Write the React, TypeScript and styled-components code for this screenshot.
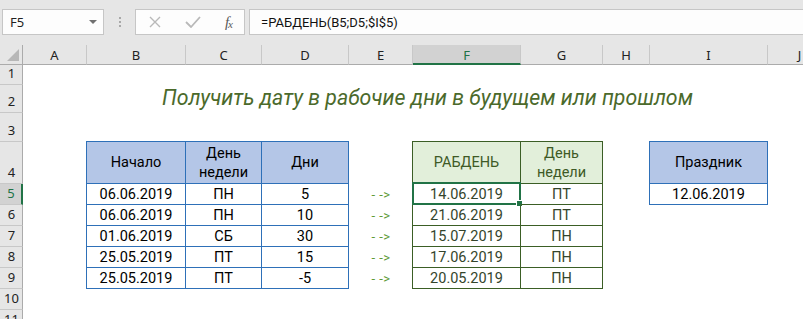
import React from 'react';
import styled, { createGlobalStyle } from 'styled-components';

const GlobalStyle = createGlobalStyle`
  html, body { margin: 0; padding: 0; background: #ffffff; overflow: hidden; }
  #root { width: 803px; height: 319px; overflow: hidden; }
`;

const COLS = [23, 64, 99, 76, 87, 64, 108, 82, 47, 118, 64];
const ROWS = [20, 20, 28, 29, 42, 21, 21, 21, 21, 21, 21, 21];
const LETTERS = ['A', 'B', 'C', 'D', 'E', 'F', 'G', 'H', 'I', 'J'];
const px = (a: number[]) => a.map((v) => `${v}px`).join(' ');

const Page = styled.div`
  width: 803px;
  height: 319px;
  overflow: hidden;
  background: #ffffff;
  display: flex;
  flex-direction: column;
`;

const TopBar = styled.div`
  height: 45px;
  flex: none;
  background: #e6e6e6;
  display: flex;
  align-items: flex-start;
  padding-top: 9px;
  box-sizing: border-box;
  font-family: 'Noto Sans', sans-serif;
`;

const Box = styled.div`
  height: 26px;
  box-sizing: border-box;
  background: #fdfdfd;
  border: 1px solid #c6c6c6;
  display: flex;
  align-items: center;
`;

const NameBox = styled(Box)`
  width: 102px;
  margin-left: 2px;
  padding: 0 6px 0 7px;
  justify-content: space-between;
  font-size: 13px;
  color: #222;
`;

const Grip = styled.div`
  width: 31px;
  height: 26px;
  display: flex;
  flex-direction: column;
  align-items: center;
  justify-content: center;
  gap: 2px;
  span {
    width: 2px;
    height: 2px;
    background: #a8a8a8;
  }
`;

const FxBox = styled(Box)`
  width: 110px;
  padding: 0 12px 0 13px;
  justify-content: space-between;
`;

const FxText = styled.span`
  font-family: 'Liberation Serif', serif;
  font-style: italic;
  font-size: 15px;
  color: #5a5a5a;
  letter-spacing: -1px;
  sub {
    font-size: 11px;
    vertical-align: -1px;
  }
`;

const FormulaBox = styled(Box)`
  flex: 1;
  margin-left: 4px;
  border-right: none;
  padding-left: 11px;
  font-family: Roboto, sans-serif;
  font-size: 13px;
  color: #111;
`;

const Sheet = styled.div`
  display: grid;
  grid-template-columns: ${px(COLS)};
  grid-template-rows: ${px(ROWS)};
  font-family: Roboto, sans-serif;
`;

const Corner = styled.div`
  grid-row: 1;
  grid-column: 1;
  background: #e6e6e6;
  border-right: 1px solid #ababab;
  border-bottom: 1px solid #ababab;
  box-sizing: border-box;
  display: flex;
  align-items: flex-end;
  justify-content: flex-end;
  padding: 0 3px 3px 0;
`;

const ColHead = styled.div<{ $col: number; $active?: boolean }>`
  grid-row: 1;
  grid-column: ${(p) => p.$col};
  box-sizing: border-box;
  background: ${(p) => (p.$active ? '#d2d2d2' : '#e6e6e6')};
  border-right: 1px solid #c8c8c8;
  border-bottom: ${(p) => (p.$active ? '2px solid #217346' : '1px solid #ababab')};
  display: flex;
  align-items: center;
  justify-content: center;
  font-family: 'Noto Sans', sans-serif;
  font-size: 13px;
  color: ${(p) => (p.$active ? '#217346' : '#222')};
  padding-top: ${(p) => (p.$active ? '1px' : '0')};
`;

const RowHead = styled.div<{ $row: number; $active?: boolean }>`
  grid-row: ${(p) => p.$row};
  grid-column: 1;
  box-sizing: border-box;
  background: ${(p) => (p.$active ? '#d2d2d2' : '#e6e6e6')};
  border-right: ${(p) => (p.$active ? '2px solid #217346' : '1px solid #ababab')};
  border-bottom: 1px solid #c8c8c8;
  display: flex;
  align-items: flex-end;
  justify-content: center;
  padding-bottom: 2px;
  padding-left: 1px;
  font-family: 'Noto Sans', sans-serif;
  font-size: 13px;
  color: ${(p) => (p.$active ? '#217346' : '#222')};
`;

const Title = styled.div`
  grid-row: 3;
  grid-column: 3 / 11;
  display: flex;
  align-items: flex-end;
  justify-content: center;
  padding-bottom: 3px;
  font-style: italic;
  font-size: 21.3px;
  color: #4b6a2b;
  white-space: nowrap;
`;

const Arrow = styled.div<{ $row: number }>`
  grid-row: ${(p) => p.$row};
  grid-column: 6;
  display: flex;
  align-items: center;
  justify-content: center;
  font-size: 13px;
  color: #5d9a37;
  letter-spacing: 0.5px;
  white-space: pre;
`;

const Table = styled.div<{
  $col: string;
  $row: string;
  $cols: number[];
  $rows: number[];
  $line: string;
}>`
  grid-column: ${(p) => p.$col};
  grid-row: ${(p) => p.$row};
  margin: -1px 0 0 -1px;
  display: grid;
  grid-template-columns: ${(p) => px(p.$cols)};
  grid-template-rows: ${(p) => px(p.$rows)};
  border-left: 1px solid ${(p) => p.$line};
  border-top: 1px solid ${(p) => p.$line};
`;

const Cell = styled.div<{ $line: string; $fill?: string; $color: string }>`
  position: relative;
  box-sizing: border-box;
  border-right: 1px solid ${(p) => p.$line};
  border-bottom: 1px solid ${(p) => p.$line};
  background: ${(p) => p.$fill || 'transparent'};
  color: ${(p) => p.$color};
  display: flex;
  align-items: center;
  justify-content: center;
  text-align: center;
  font-size: 14.5px;
  line-height: 19px;
`;

const Selection = styled.div`
  position: absolute;
  top: -2px;
  left: -1px;
  right: -1px;
  bottom: -1px;
  border: 2px solid #217346;
  pointer-events: none;
`;

const Handle = styled.div`
  position: absolute;
  right: -4px;
  bottom: -4px;
  width: 5px;
  height: 5px;
  background: #217346;
  border: 1px solid #ffffff;
  box-sizing: content-box;
`;

const BLUE = '#2e70b8';
const BLUE_FILL = '#b4c6e7';
const GREEN = '#3b5e25';
const GREEN_FILL = '#e2efda';

const t1 = [
  ['06.06.2019', 'ПН', '5'],
  ['06.06.2019', 'ПН', '10'],
  ['01.06.2019', 'СБ', '30'],
  ['25.05.2019', 'ПТ', '15'],
  ['25.05.2019', 'ПТ', '-5'],
];
const t2 = [
  ['14.06.2019', 'ПТ'],
  ['21.06.2019', 'ПТ'],
  ['15.07.2019', 'ПН'],
  ['17.06.2019', 'ПН'],
  ['20.05.2019', 'ПН'],
];

export default function App() {
  return (
    <Page>
      <GlobalStyle />
      <TopBar>
        <NameBox>
          <span>F5</span>
          <svg width="8" height="4" viewBox="0 0 8 4">
            <path d="M0 0 H8 L4 4 Z" fill="#707070" />
          </svg>
        </NameBox>
        <Grip>
          <span />
          <span />
          <span />
        </Grip>
        <FxBox>
          <svg width="12" height="12" viewBox="0 0 12 12">
            <path d="M1 1 L11 11 M11 1 L1 11" stroke="#b9b9b9" strokeWidth="1.4" fill="none" />
          </svg>
          <svg width="16" height="12" viewBox="0 0 16 12">
            <path d="M1 6 L6 11 L15 1" stroke="#b9b9b9" strokeWidth="1.8" fill="none" />
          </svg>
          <FxText>
            f<sub>x</sub>
          </FxText>
        </FxBox>
        <FormulaBox>=РАБДЕНЬ(B5;D5;$I$5)</FormulaBox>
      </TopBar>
      <Sheet>
        <Corner>
          <svg width="12" height="12" viewBox="0 0 12 12">
            <path d="M12 0 V12 H0 Z" fill="#b7b7b7" />
          </svg>
        </Corner>
        {LETTERS.map((l, i) => (
          <ColHead key={l} $col={i + 2} $active={l === 'F'}>
            {l}
          </ColHead>
        ))}
        {Array.from({ length: 11 }, (_, i) => (
          <RowHead key={i} $row={i + 2} $active={i + 1 === 5}>
            {i + 1}
          </RowHead>
        ))}
        <Title>Получить дату в рабочие дни в будущем или прошлом</Title>

        <Table $col="3 / 6" $row="5 / 11" $cols={[99, 76, 87]} $rows={[42, 21, 21, 21, 21, 21]} $line={BLUE}>
          <Cell $line={BLUE} $fill={BLUE_FILL} $color="#000">Начало</Cell>
          <Cell $line={BLUE} $fill={BLUE_FILL} $color="#000">
            День
            <br />
            недели
          </Cell>
          <Cell $line={BLUE} $fill={BLUE_FILL} $color="#000">Дни</Cell>
          {t1.map((r, ri) =>
            r.map((v, ci) => (
              <Cell key={`${ri}-${ci}`} $line={BLUE} $color="#000">
                {v}
              </Cell>
            ))
          )}
        </Table>

        {[6, 7, 8, 9, 10].map((r) => (
          <Arrow key={r} $row={r}>
            {'- ->'}
          </Arrow>
        ))}

        <Table $col="7 / 9" $row="5 / 11" $cols={[108, 82]} $rows={[42, 21, 21, 21, 21, 21]} $line={GREEN}>
          <Cell $line={GREEN} $fill={GREEN_FILL} $color="#3e5a26">РАБДЕНЬ</Cell>
          <Cell $line={GREEN} $fill={GREEN_FILL} $color="#3e5a26">
            День
            <br />
            недели
          </Cell>
          {t2.map((r, ri) =>
            r.map((v, ci) => (
              <Cell key={`${ri}-${ci}`} $line={GREEN} $color="#34452c">
                {v}
                {ri === 0 && ci === 0 && (
                  <Selection>
                    <Handle />
                  </Selection>
                )}
              </Cell>
            ))
          )}
        </Table>

        <Table $col="10 / 11" $row="5 / 7" $cols={[118]} $rows={[42, 21]} $line={BLUE}>
          <Cell $line={BLUE} $fill={BLUE_FILL} $color="#000">Праздник</Cell>
          <Cell $line={BLUE} $color="#000">12.06.2019</Cell>
        </Table>
      </Sheet>
    </Page>
  );
}
